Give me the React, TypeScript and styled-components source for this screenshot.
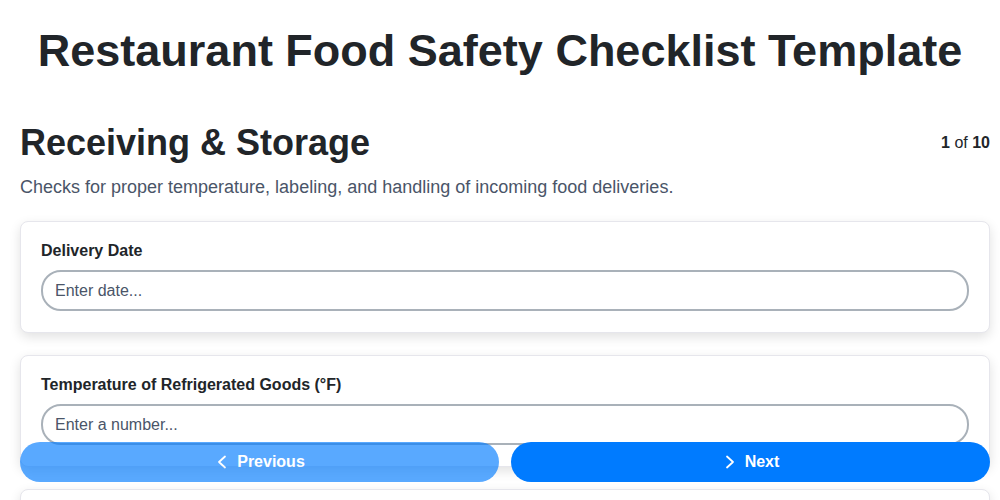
import React from 'react';
import styled, { createGlobalStyle } from 'styled-components';

const GlobalStyle = createGlobalStyle`
  body {
    margin: 0;
    background: #ffffff;
    font-family: "Liberation Sans", Arial, sans-serif;
    color: #212529;
  }
  * {
    box-sizing: border-box;
  }
`;

const Page = styled.div`
  padding: 25px 0 120px;
`;

const Title = styled.h1`
  margin: 0 0 45px;
  font-size: 45px;
  font-weight: 700;
  text-align: center;
  color: #212529;
`;

const Content = styled.main`
  padding: 0 10px 0 20px;
`;

const SectionHeader = styled.div`
  display: flex;
  align-items: center;
  justify-content: space-between;
`;

const SectionTitle = styled.h2`
  margin: 0;
  font-size: 36px;
  font-weight: 700;
  color: #212529;
`;

const Progress = styled.div`
  font-size: 16px;
  color: #212529;

  b {
    font-weight: 700;
  }
`;

const Description = styled.p`
  margin: 13px 0 23px;
  font-size: 18px;
  color: #4a5568;
`;

const Card = styled.div`
  background: #ffffff;
  border: 1px solid #e6e6ec;
  border-radius: 8px;
  padding: 19px 20px 21px;
  margin-bottom: 22px;
  box-shadow: 0 4px 12px rgba(0, 0, 0, 0.12);
`;

const Label = styled.label`
  display: block;
  font-size: 16px;
  line-height: 19px;
  font-weight: 700;
  margin-bottom: 10px;
  color: #212529;
`;

const Input = styled.input`
  display: block;
  width: 100%;
  height: 41px;
  padding: 0 12px;
  border: 2px solid #a9b1b9;
  border-radius: 20px;
  font-family: "Liberation Sans", Arial, sans-serif;
  font-size: 16px;
  color: #212529;
  background: #ffffff;
  outline: none;

  &::placeholder {
    color: #4a5568;
  }
`;

const Footer = styled.div`
  position: fixed;
  left: 20px;
  right: 10px;
  bottom: 18px;
  display: grid;
  grid-template-columns: 1fr 1fr;
  gap: 12px;
`;

const NavButton = styled.button<{ $disabled?: boolean }>`
  display: flex;
  align-items: center;
  justify-content: center;
  gap: 7px;
  height: 40px;
  border: none;
  border-radius: 20px;
  background: #007bff;
  color: #ffffff;
  font-family: "Liberation Sans", Arial, sans-serif;
  font-size: 16px;
  font-weight: 700;
  opacity: ${(p) => (p.$disabled ? 0.65 : 1)};
  cursor: ${(p) => (p.$disabled ? 'default' : 'pointer')};
`;

function Chevron({ dir }: { dir: 'left' | 'right' }) {
  const points = dir === 'left' ? '11 2.5 5 8 11 13.5' : '5 2.5 11 8 5 13.5';
  return (
    <svg width="16" height="16" viewBox="0 0 16 16" fill="none">
      <polyline
        points={points}
        stroke="currentColor"
        strokeWidth="1.8"
        strokeLinecap="round"
        strokeLinejoin="round"
      />
    </svg>
  );
}

const fields = [
  { label: 'Delivery Date', placeholder: 'Enter date...' },
  { label: 'Temperature of Refrigerated Goods (°F)', placeholder: 'Enter a number...' },
  { label: 'Temperature of Frozen Goods (°F)', placeholder: 'Enter a number...' },
  { label: 'Supplier Name', placeholder: 'Enter text...' },
];

export default function App() {
  return (
    <>
      <GlobalStyle />
      <Page>
        <Title>Restaurant Food Safety Checklist Template</Title>
        <Content>
          <SectionHeader>
            <SectionTitle>Receiving &amp; Storage</SectionTitle>
            <Progress>
              <b>1</b> of <b>10</b>
            </Progress>
          </SectionHeader>
          <Description>
            Checks for proper temperature, labeling, and handling of incoming food deliveries.
          </Description>
          {fields.map((f) => (
            <Card key={f.label}>
              <Label>{f.label}</Label>
              <Input placeholder={f.placeholder} />
            </Card>
          ))}
        </Content>
      </Page>
      <Footer>
        <NavButton $disabled>
          <Chevron dir="left" />
          Previous
        </NavButton>
        <NavButton>
          <Chevron dir="right" />
          Next
        </NavButton>
      </Footer>
    </>
  );
}
